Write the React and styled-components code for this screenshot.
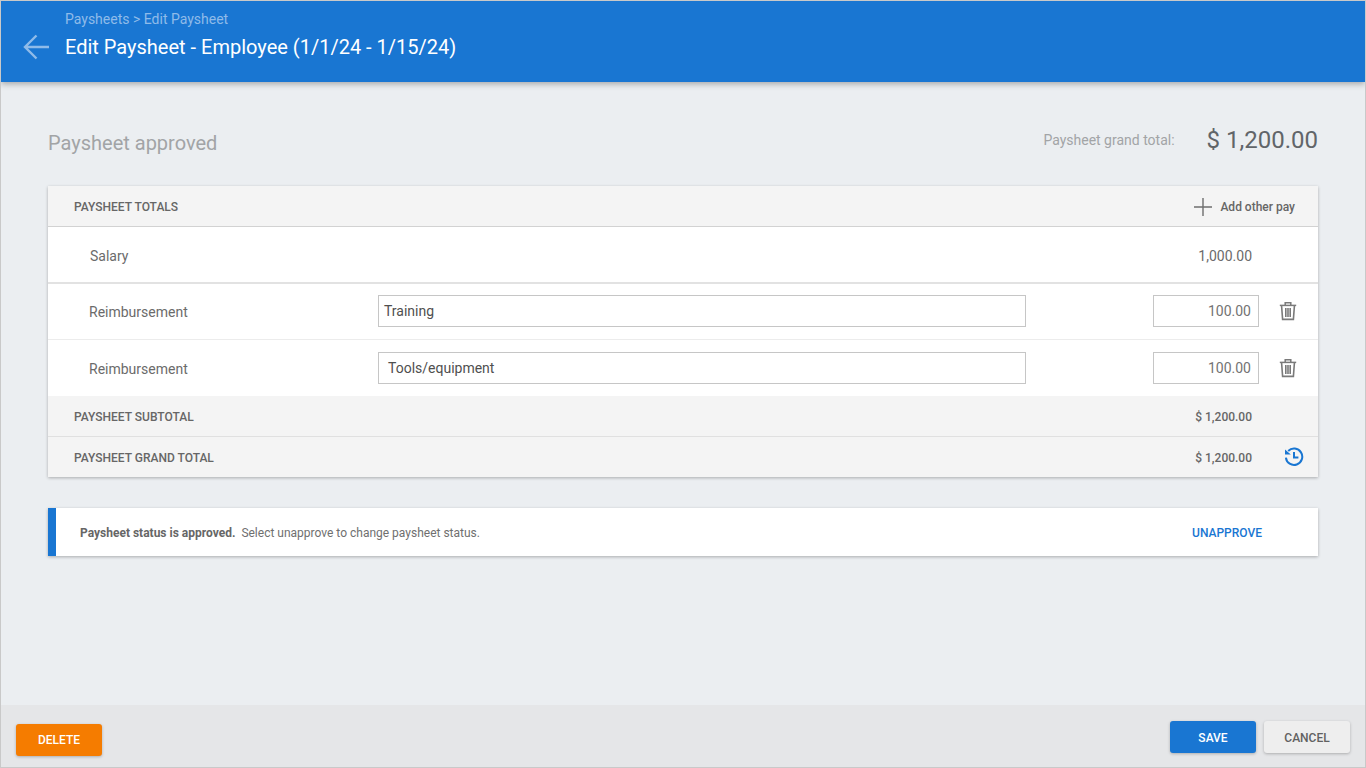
import React from "react";
import styled, { createGlobalStyle } from "styled-components";

const GlobalStyle = createGlobalStyle`
  html, body {
    margin: 0;
    padding: 0;
    background: #ebeef1;
    font-family: Roboto, "Liberation Sans", sans-serif;
  }
  * { box-sizing: border-box; }
`;

const Page = styled.div`
  width: 1366px;
  height: 768px;
  display: flex;
  flex-direction: column;
  border: 1px solid #c9c9c9;
  background: #ebeef1;
  overflow: hidden;
`;

const Header = styled.header`
  height: 81px;
  flex: none;
  background: #1976d2;
  display: flex;
  align-items: flex-start;
  padding: 11px 0 0 22px;
  box-shadow: 0 2px 6px rgba(0, 0, 0, 0.3);
  position: relative;
  z-index: 1;
`;

const BackButton = styled.div`
  width: 26px;
  height: 26px;
  margin: 22px 16px 0 0;
  svg {
    display: block;
    stroke: #8fbbe9;
  }
`;

const Crumb = styled.div`
  font-size: 14px;
  line-height: 14px;
  color: #8fbbe9;
`;

const Title = styled.h1`
  margin: 7px 0 0;
  font-size: 20px;
  line-height: 28px;
  font-weight: 400;
  color: #fff;
`;

const Main = styled.main`
  flex: 1;
  padding: 42px 47px 0;
`;

const Summary = styled.div`
  display: flex;
  justify-content: space-between;
  height: 62px;
`;

const StatusHeading = styled.div`
  font-size: 20px;
  line-height: 38px;
  color: #a2a4a6;
`;

const GrandTotal = styled.div`
  display: flex;
  align-items: center;
  height: 32px;
  gap: 32px;
`;

const GrandLabel = styled.span`
  font-size: 14px;
  color: #a2a4a6;
`;

const GrandValue = styled.span`
  font-size: 24px;
  color: #616569;
`;

const Card = styled.section`
  background: #fff;
  box-shadow: 0 1px 3px rgba(0, 0, 0, 0.28);
`;

const BandRow = styled.div`
  height: ${(p) => p.$height || 40}px;
  background: #f4f4f4;
  border-bottom: ${(p) => (p.$rule ? `1px solid ${p.$rule}` : "none")};
  display: flex;
  align-items: center;
  padding: 2px 0 0 26px;
  font-size: 12px;
  font-weight: 500;
  color: #666;
`;

const BandAmount = styled.span`
  margin-left: auto;
  width: 66px;
  margin-right: 66px;
  text-align: right;
  white-space: nowrap;
  font-size: 12px;
  font-weight: 500;
`;

const AddOther = styled.div`
  margin-left: auto;
  margin-right: 23px;
  display: flex;
  align-items: center;
  gap: 7px;
  svg {
    display: block;
    margin-top: -1px;
  }
`;

const SalaryRow = styled.div`
  height: 57px;
  display: flex;
  align-items: center;
  padding: 2px 66px 0 42px;
  border-bottom: 2px solid #e2e2e2;
  font-size: 14px;
  color: #6b6b6b;
  span:last-child {
    margin-left: auto;
  }
`;

const PayRow = styled.div`
  height: 56px;
  display: flex;
  align-items: center;
  padding: 0 0 ${(p) => (p.$last ? 0 : 1)}px 41px;
  border-bottom: ${(p) => (p.$last ? "none" : "1px solid #ececec")};
`;

const PayLabel = styled.span`
  width: 289px;
  padding-top: 2px;
  font-size: 14px;
  color: #6b6b6b;
`;

const TextField = styled.div`
  height: 32px;
  border: 1px solid #c6c6c6;
  background: #fff;
  display: flex;
  align-items: center;
  font-size: 14px;
`;

const NameField = styled(TextField)`
  width: 648px;
  padding-left: ${(p) => p.$inset}px;
  color: #4f4f4f;
`;

const AmountField = styled(TextField)`
  width: 106px;
  margin-left: 127px;
  justify-content: flex-end;
  padding-right: 7px;
  color: #737373;
`;

const IconSlot = styled.div`
  margin-left: 20px;
  svg {
    display: block;
  }
`;

const HistorySlot = styled.div`
  position: absolute;
  right: 14px;
  top: 10px;
  svg {
    display: block;
  }
`;

const GrandRow = styled(BandRow)`
  position: relative;
`;

const Notice = styled.section`
  margin-top: 31px;
  height: 48px;
  background: #fff;
  border-left: 8px solid #1976d2;
  box-shadow: 0 1px 3px rgba(0, 0, 0, 0.28);
  display: flex;
  align-items: center;
  padding: 2px 56px 0 24px;
  font-size: 12px;
  color: #6f6f6f;
  strong {
    font-weight: 700;
    margin-right: 6px;
    color: #666;
  }
`;

const LinkAction = styled.span`
  margin-left: auto;
  font-size: 12px;
  font-weight: 500;
  color: #1976d2;
`;

const Footer = styled.footer`
  height: 62px;
  flex: none;
  background: #e5e6e8;
  display: flex;
  align-items: flex-start;
  padding: 0 15px;
`;

const Button = styled.div`
  width: 86px;
  height: 32px;
  border-radius: 3px;
  display: flex;
  align-items: center;
  justify-content: center;
  padding-top: ${(p) => p.$nudge || 0}px;
  font-size: 12px;
  font-weight: 500;
  background: ${(p) => p.$bg};
  color: ${(p) => p.$color || "#fff"};
  margin-top: ${(p) => p.$top}px;
  box-shadow: 0 1px 3px rgba(0, 0, 0, 0.25);
`;

const FooterRight = styled.div`
  margin-left: auto;
  display: flex;
  gap: 8px;
`;

const Trash = () => (
  <svg width="18" height="20" viewBox="0 0 18 20" fill="none" stroke="#7a7a7a">
    <path d="M0.8 4.4h16.4" strokeWidth="1.5" />
    <path d="M6.2 4V1.8h5.6V4" strokeWidth="1.5" />
    <path d="M2.6 5l1 13.4h10.8l1-13.4" strokeWidth="1.6" />
    <path d="M6.8 7v9M9 7v9M11.2 7v9" strokeWidth="1.6" />
  </svg>
);

const History = () => (
  <svg width="20" height="20" viewBox="0 0 20 20" fill="none" stroke="#1976d2" strokeWidth="2">
    <path d="M4.2 4A8.2 8.2 0 1 1 1.9 10.6" />
    <path d="M1 2.6l5.8 5H1z" fill="#1976d2" stroke="none" />
    <path d="M10 5v5.4h4.4" />
  </svg>
);

const Plus = () => (
  <svg width="20" height="20" viewBox="0 0 20 20" stroke="#6e6e6e" strokeWidth="1.4">
    <path d="M10 1v18M1 10h18" />
  </svg>
);

const Arrow = () => (
  <svg width="26" height="26" viewBox="0 0 26 26" fill="none" strokeWidth="2.4">
    <path d="M26 13H2M13.5 1.5L2 13l11.5 11.5" />
  </svg>
);

const reimbursements = [
  { name: "Training", inset: 5 },
  { name: "Tools/equipment", inset: 9, last: true },
];

export default function App() {
  return (
    <>
      <GlobalStyle />
      <Page>
        <Header>
          <BackButton>
            <Arrow />
          </BackButton>
          <div>
            <Crumb>Paysheets &gt; Edit Paysheet</Crumb>
            <Title>Edit Paysheet - Employee (1/1/24 - 1/15/24)</Title>
          </div>
        </Header>
        <Main>
          <Summary>
            <StatusHeading>Paysheet approved</StatusHeading>
            <GrandTotal>
              <GrandLabel>Paysheet grand total:</GrandLabel>
              <GrandValue>$ 1,200.00</GrandValue>
            </GrandTotal>
          </Summary>
          <Card>
            <BandRow $height={41} $rule="#d2d2d2">
              PAYSHEET TOTALS
              <AddOther>
                <Plus />
                Add other pay
              </AddOther>
            </BandRow>
            <SalaryRow>
              <span>Salary</span>
              <span>1,000.00</span>
            </SalaryRow>
            {reimbursements.map((r) => (
              <PayRow key={r.name} $last={r.last}>
                <PayLabel>Reimbursement</PayLabel>
                <NameField $inset={r.inset}>{r.name}</NameField>
                <AmountField>100.00</AmountField>
                <IconSlot>
                  <Trash />
                </IconSlot>
              </PayRow>
            ))}
            <BandRow $height={41} $rule="#e0e0e0">
              PAYSHEET SUBTOTAL
              <BandAmount>$ 1,200.00</BandAmount>
            </BandRow>
            <GrandRow $height={40}>
              PAYSHEET GRAND TOTAL
              <BandAmount>$ 1,200.00</BandAmount>
              <HistorySlot>
                <History />
              </HistorySlot>
            </GrandRow>
          </Card>
          <Notice>
            <strong>Paysheet status is approved.</strong>
            Select unapprove to change paysheet status.
            <LinkAction>UNAPPROVE</LinkAction>
          </Notice>
        </Main>
        <Footer>
          <Button $bg="#f57c00" $top={19}>DELETE</Button>
          <FooterRight>
            <Button $bg="#1976d2" $top={16} $nudge={1}>SAVE</Button>
            <Button $bg="#eeeeee" $color="#616161" $top={16} $nudge={1}>CANCEL</Button>
          </FooterRight>
        </Footer>
      </Page>
    </>
  );
}
